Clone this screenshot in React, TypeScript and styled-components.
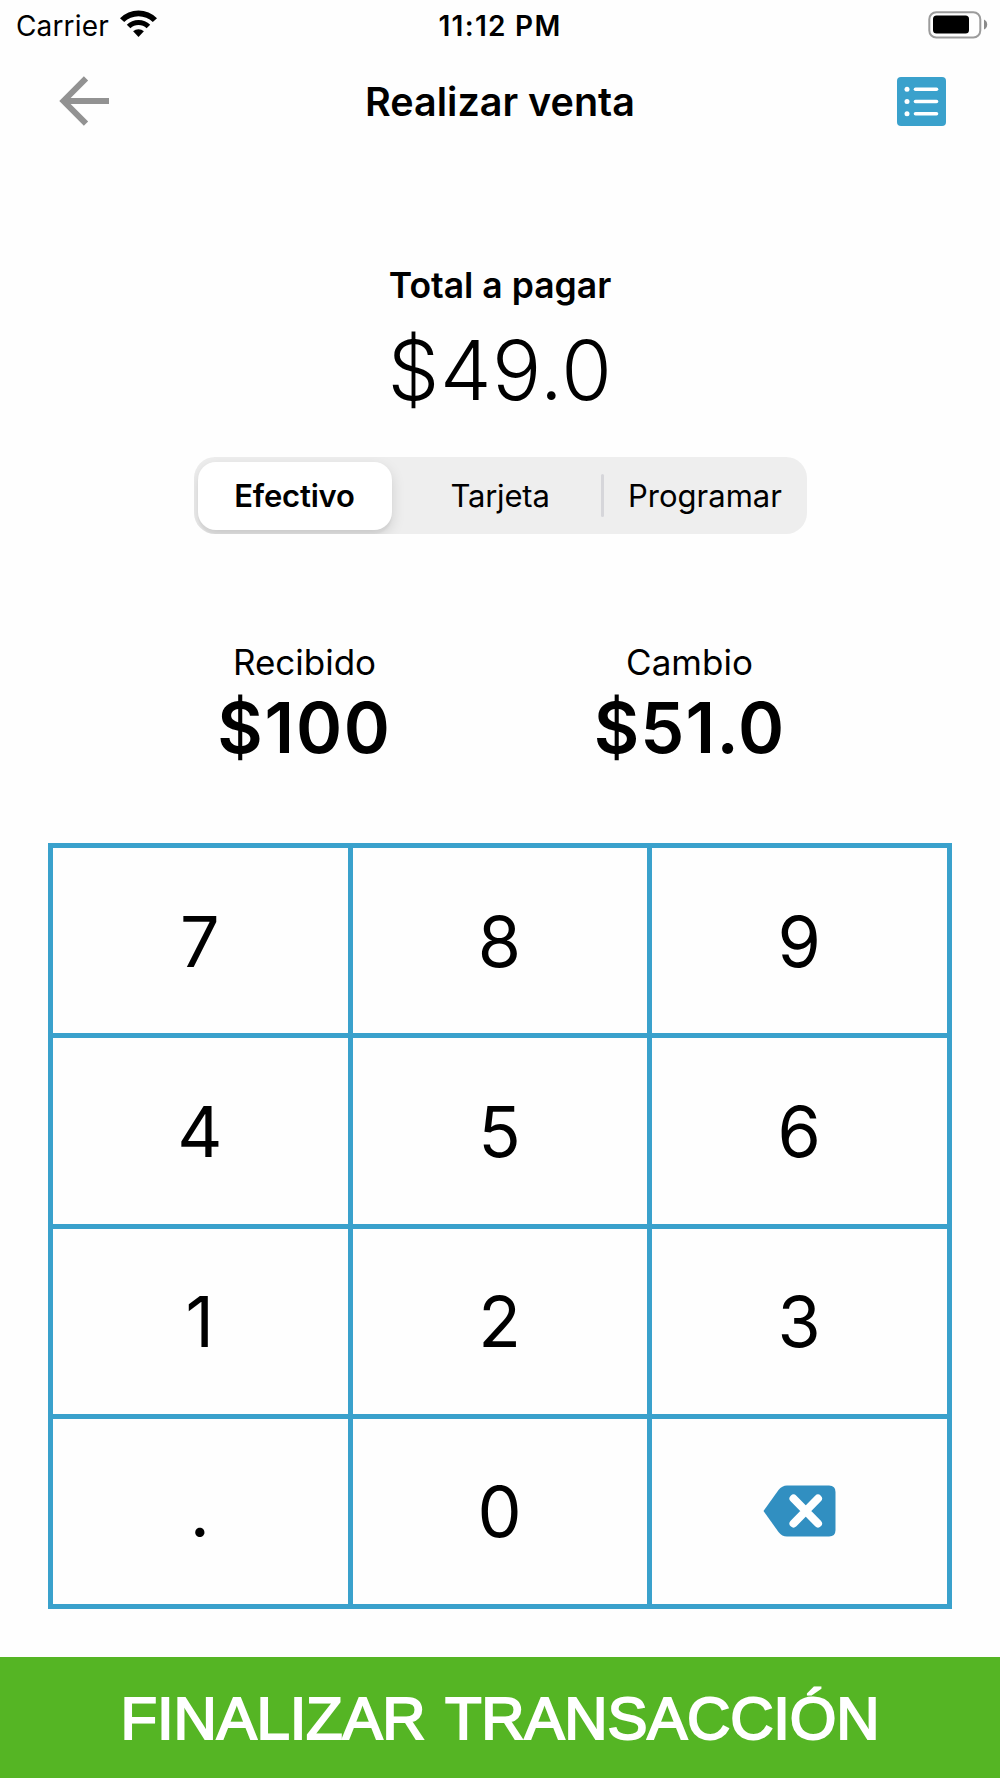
import React from "react";
import styled, { createGlobalStyle } from "styled-components";

const BLUE = "#3aa1cc";

const GlobalStyle = createGlobalStyle`
  * { box-sizing: border-box; }
  body { margin: 0; background: #fefefe; }
`;

const Screen = styled.div`
  width: 1000px;
  height: 1778px;
  display: flex;
  flex-direction: column;
  background: #fefefe;
  color: #000;
  font-family: Inter, "Liberation Sans", sans-serif;
  overflow: hidden;
`;

const Label = styled.span<{ $size: number; $weight?: number; $spacing?: number }>`
  display: block;
  white-space: nowrap;
  line-height: 1;
  padding-top: 0.02em;
  margin-bottom: -0.02em;
  font-size: ${(p) => p.$size}px;
  font-weight: ${(p) => p.$weight ?? 400};
  letter-spacing: ${(p) => p.$spacing ?? 0}px;
`;

const StatusBar = styled.header`
  height: 50px;
  display: grid;
  grid-template-columns: 1fr auto 1fr;
  align-items: center;
`;

const StatusSide = styled.div<{ $end?: boolean }>`
  display: flex;
  align-items: center;
  gap: 11px;
  padding: 0 12px 0 16px;
  justify-content: ${(p) => (p.$end ? "flex-end" : "flex-start")};
`;

const NavBar = styled.nav`
  height: 103px;
  display: grid;
  grid-template-columns: 1fr auto 1fr;
  align-items: center;
`;

const NavButton = styled.button<{ $end?: boolean }>`
  display: flex;
  padding: 0;
  margin: 0 54px 1px 59px;
  border: 0;
  background: none;
  justify-self: ${(p) => (p.$end ? "end" : "start")};
`;

const Total = styled.section`
  margin-top: 114px;
  display: flex;
  flex-direction: column;
  align-items: center;
  gap: 26px;
`;

const Segmented = styled.div`
  width: 613px;
  height: 77px;
  margin: 46.5px auto 0;
  padding: 4px 0 4px 4px;
  display: grid;
  grid-template-columns: 202px 201px 3px 1fr;
  align-items: center;
  border-radius: 21px;
  background: #eeeeee;
  overflow: hidden;
`;

const Segment = styled.button<{ $active?: boolean }>`
  width: ${(p) => (p.$active ? "194px" : "auto")};
  height: 68px;
  padding: 0 0 2px;
  display: flex;
  align-items: center;
  justify-content: center;
  border: 0;
  border-radius: 18px;
  font-family: inherit;
  color: #000;
  background: ${(p) => (p.$active ? "#fff" : "transparent")};
  box-shadow: ${(p) => (p.$active ? "0 5px 14px rgba(0,0,0,.13), 0 4px 2px rgba(0,0,0,.04)" : "none")};
`;

const Divider = styled.i`
  height: 43px;
  border-radius: 2px;
  background: #d6d6da;
`;

const Amounts = styled.section`
  margin-top: 110px;
  padding: 0 118px 0 112px;
  display: grid;
  grid-template-columns: 1fr 1fr;
`;

const AmountBox = styled.div`
  height: 118px;
  display: flex;
  flex-direction: column;
  align-items: center;
  gap: 13px;
`;

const Keypad = styled.div`
  width: 904px;
  height: 766px;
  margin: 81px auto 0;
  padding: 5px;
  display: grid;
  grid-template-columns: repeat(3, 1fr);
  grid-template-rows: repeat(4, 1fr);
  gap: 5px;
  background: ${BLUE};
`;

const Key = styled.button`
  min-width: 0;
  padding: 0 1px 1px 0;
  display: flex;
  align-items: center;
  justify-content: center;
  border: 0;
  color: #000;
  font-family: inherit;
  background: #fefefe;
`;

const Finish = styled.button`
  height: 121px;
  margin-top: auto;
  padding: 2px 0 0;
  border: 0;
  background: #55b524;
  color: #fff;
  font-family: "Liberation Sans", Arial, sans-serif;
  font-size: 60px;
  line-height: 1;
  letter-spacing: -0.2px;
  word-spacing: 4px;
  white-space: nowrap;
  -webkit-text-stroke: 2px #fff;
`;

const WifiSvg = styled.svg`
  margin-top: -2px;
`;

const WifiIcon = () => (
  <WifiSvg width="37" height="28" viewBox="0 0 37 28">
    <path d="M0 8.200a25.800 25.800 0 0 1 37 0l-4.200 3.900a20.500 20.500 0 0 0-28.600 0z" />
    <path d="M6.800 14.800a16.400 16.400 0 0 1 23.400 0l-3.600 3.400a12 12 0 0 0-16.200 0z" />
    <path d="M13.100 21.300a8 8 0 0 1 10.800 0L18.500 27z" />
  </WifiSvg>
);

const BatteryIcon = () => (
  <svg width="60" height="28" viewBox="0 0 60 28">
    <rect x="1.300" y="1.200" width="51" height="25.400" rx="7" fill="none" stroke="#9b9b9b" strokeWidth="2" />
    <rect x="5" y="4.500" width="36" height="18" rx="3.500" />
    <path d="M56 8.500q3.200 1.500 3.200 5t-3.200 5z" fill="#8a8a8a" />
  </svg>
);

const BackIcon = () => (
  <svg width="51" height="50" viewBox="0 0 51 50" fill="none" stroke="#929292" strokeWidth="6">
    <path d="M50 25H5M27 2.300 4.500 25l22.500 22.700" />
  </svg>
);

const ListIcon = () => (
  <svg width="49" height="49" viewBox="0 0 49 49">
    <rect width="49" height="49" rx="4" fill={BLUE} />
    {[12.3, 24.5, 36.8].map((y) => (
      <g key={y}>
        <circle cx="10" cy={y} r="2.500" fill="#fff" />
        <path d={`M18.500 ${y}H39.500`} stroke="#fff" strokeWidth="3.600" strokeLinecap="round" />
      </g>
    ))}
  </svg>
);

const DeleteIcon = () => (
  <svg width="73" height="52" viewBox="0 0 73 52">
    <path d="M.5 26 15.500 5Q19 .5 24 .5H66Q72.500 .5 72.500 7V45Q72.500 51.500 66 51.500H24Q19 51.500 15.500 47z" fill="#318fc1" />
    <path d="M30.500 13.500 55 38.500M55 13.500 30.500 38.500" stroke="#fff" strokeWidth="8" strokeLinecap="round" />
  </svg>
);

const KEYS = ["7", "8", "9", "4", "5", "6", "1", "2", "3", ".", "0"];

export default function App() {
  return (
    <Screen>
      <GlobalStyle />
      <StatusBar>
        <StatusSide>
          <Label $size={28} $spacing={0.15}>Carrier</Label>
          <WifiIcon />
        </StatusSide>
        <Label $size={28} $weight={600} $spacing={1.3}>11:12 PM</Label>
        <StatusSide $end>
          <BatteryIcon />
        </StatusSide>
      </StatusBar>
      <NavBar>
        <NavButton aria-label="Atrás"><BackIcon /></NavButton>
        <Label $size={39.5} $weight={600}>Realizar venta</Label>
        <NavButton $end aria-label="Lista"><ListIcon /></NavButton>
      </NavBar>
      <Total>
        <Label $size={35.5} $weight={600}>Total a pagar</Label>
        <Label $size={82} $weight={300} $spacing={0.5}>$49.0</Label>
      </Total>
      <Segmented>
        <Segment $active><Label $size={31} $weight={600} $spacing={-0.2}>Efectivo</Label></Segment>
        <Segment><Label $size={31} $spacing={-0.2}>Tarjeta</Label></Segment>
        <Divider />
        <Segment><Label $size={31}>Programar</Label></Segment>
      </Segmented>
      <Amounts>
        <AmountBox>
          <Label $size={35}>Recibido</Label>
          <Label $size={70} $weight={600} $spacing={1.7}>$100</Label>
        </AmountBox>
        <AmountBox>
          <Label $size={35}>Cambio</Label>
          <Label $size={70} $weight={600} $spacing={1.2}>$51.0</Label>
        </AmountBox>
      </Amounts>
      <Keypad>
        {KEYS.map((k) => (
          <Key key={k}><Label $size={70}>{k}</Label></Key>
        ))}
        <Key aria-label="Borrar"><DeleteIcon /></Key>
      </Keypad>
      <Finish>FINALIZAR TRANSACCIÓN</Finish>
    </Screen>
  );
}
